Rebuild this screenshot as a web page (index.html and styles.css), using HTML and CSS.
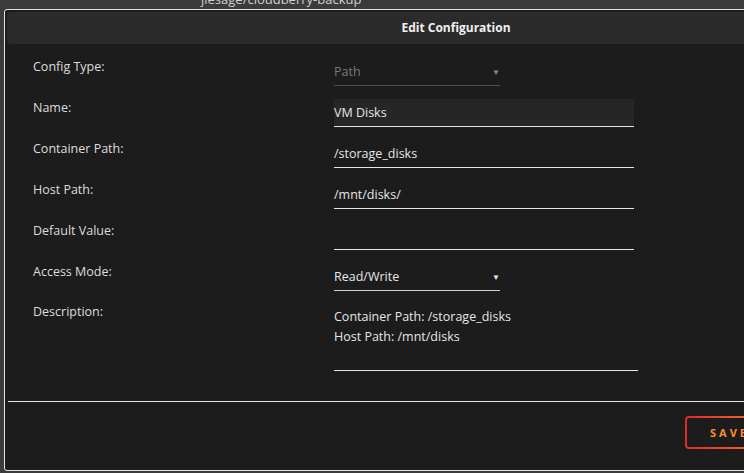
FILE: index.html
```html
<!DOCTYPE html>
<html lang="en">

<head>
    <meta charset="utf-8">
    <meta name="viewport" content="width=device-width, initial-scale=1.0">
    <title>Edit Configuration</title>
    <link rel="stylesheet" href="styles.css">
</head>

<body>

    <div class="behind">
        <span class="repo">jlesage/cloudberry-backup</span>
    </div>

    <div class="dialog">
        <div class="titlebar">Edit Configuration</div>

        <div class="form">
            <div class="row">
                <div class="label">Config Type:</div>
                <div class="control select disabled">Path<span class="arrow">&#9660;</span></div>
            </div>
            <div class="row">
                <div class="label">Name:</div>
                <div class="control text filled">VM Disks</div>
            </div>
            <div class="row">
                <div class="label">Container Path:</div>
                <div class="control text">/storage_disks</div>
            </div>
            <div class="row">
                <div class="label">Host Path:</div>
                <div class="control text">/mnt/disks/</div>
            </div>
            <div class="row">
                <div class="label">Default Value:</div>
                <div class="control text"></div>
            </div>
            <div class="row">
                <div class="label">Access Mode:</div>
                <div class="control select">Read/Write<span class="arrow">&#9660;</span></div>
            </div>
            <div class="row tall">
                <div class="label">Description:</div>
                <div class="control area">Container Path: /storage_disks<br>Host Path: /mnt/disks</div>
            </div>
        </div>

        <div class="buttons">
            <button class="save">Save</button>
        </div>
    </div>

</body>

</html>
```

FILE: styles.css
```css
body {
    background: #3b3b3b;
    font-family: 'Open Sans', sans-serif;
    margin: 0;
    padding: 0;
    overflow: hidden;
    height: 473px;
}

.behind {
    height: 9px;
    overflow: hidden;
    padding-left: 201px;
}

.repo {
    display: block;
    color: #cfcfcf;
    font-size: 13px;
    line-height: 16px;
    margin-top: -9px;
}

.dialog {
    margin-left: 4px;
    width: 904px;
    height: 462px;
    background: #1c1c1c;
    border: 1px solid #e4e4e4;
    border-radius: 3px;
    padding: 2px;
    box-sizing: border-box;
}

.titlebar {
    background: #2b2b2b;
    border-radius: 4px;
    height: 32px;
    line-height: 32px;
    text-align: center;
    color: #f0f0f0;
    font-size: 12px;
    font-weight: bold;
}

.form {
    padding-top: 3px;
    padding-left: 26px;
}

.row {
    display: flex;
    height: 41px;
}

.row.tall {
    height: 108px;
}

.label {
    width: 301px;
    padding-top: 10px;
    line-height: 20px;
    font-size: 12.5px;
    color: #dcdcdc;
}

.tall .label {
    padding-top: 9px;
}

.control {
    margin-top: 10.5px;
    height: 28px;
    line-height: 28px;
    box-sizing: border-box;
    font-size: 12.5px;
    color: #e6e6e6;
    border-bottom: 1px solid #e6e6e6;
}

.text {
    width: 300px;
}

.filled {
    background: #262626;
}

.select {
    width: 166px;
    position: relative;
    border-bottom-color: #d0d0d0;
}

.select.disabled {
    color: #7a7a7a;
    border-bottom-color: #4e4e4e;
}

.arrow {
    position: absolute;
    right: 0;
    top: 0;
    font-size: 8px;
}

.select.disabled .arrow {
    color: #8a8a8a;
}

.area {
    width: 304px;
    height: 64px;
    margin-top: 14px;
    line-height: 20px;
}

.buttons {
    margin-left: 1px;
    margin-right: -2px;
    border-top: 1px solid #e4e4e4;
    padding: 14px 0 0 677px;
}

.save {
    background: linear-gradient(#1c1c1c, #1c1c1c) padding-box, linear-gradient(90deg, #e22828, #ff8c2f) border-box;
    border: 2px solid transparent;
    border-radius: 4px;
    width: 110px;
    height: 33px;
    padding: 0 0 0 23px;
    text-align: left;
    color: #ff8c2f;
    font-family: 'Open Sans', sans-serif;
    font-size: 11px;
    font-weight: bold;
    letter-spacing: 3px;
    text-transform: uppercase;
    cursor: pointer;
}
```
